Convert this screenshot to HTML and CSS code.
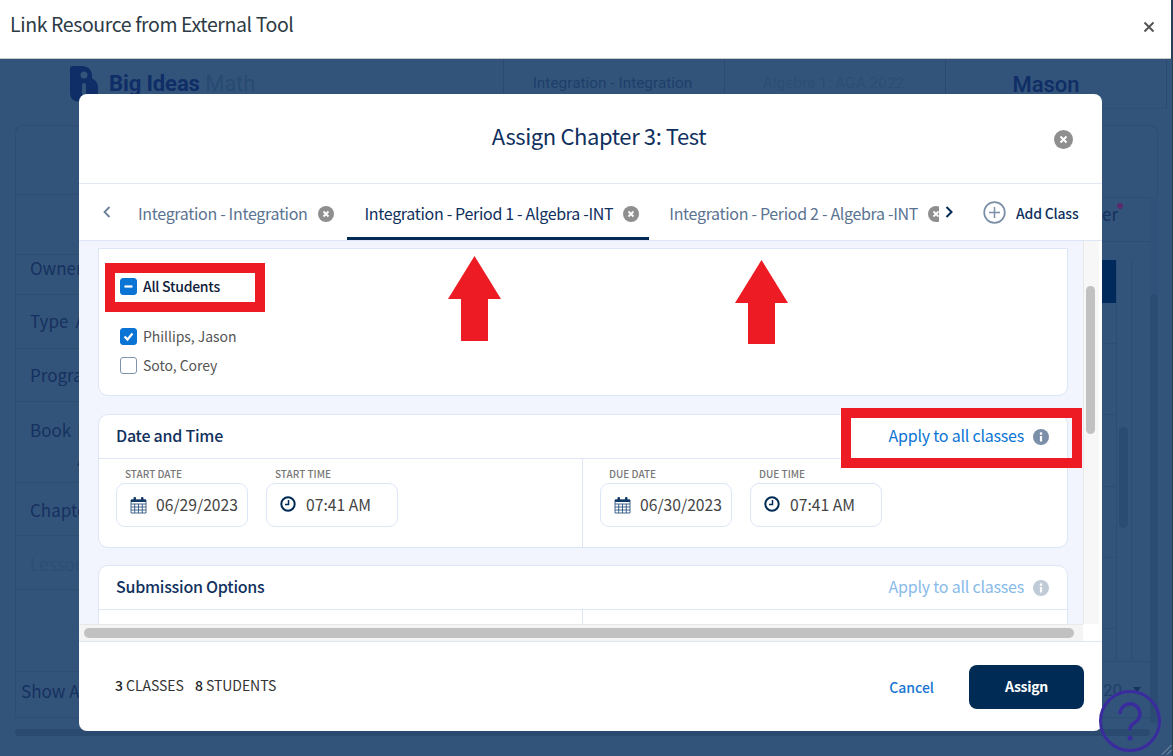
FILE: index.html
```html
<!DOCTYPE html>
<html lang="en">
<head>
<meta charset="utf-8">
<title>Link Resource from External Tool</title>
<link rel="stylesheet" href="styles.css">
</head>
<body>
<header class="tool-bar">
  <h1 class="tool-title">Link Resource from External Tool</h1>
  <svg class="tool-close" width="12" height="12" viewBox="0 0 12 12"><path d="M1.5 1.5l9 9M10.5 1.5l-9 9" stroke="#555" stroke-width="2"/></svg>
</header>
<div class="app">
  <div class="app-head">
    <div class="brand">
      <svg width="28" height="37" viewBox="0 0 28 37"><path d="M3 1h9a9.500 9.500 0 0 1 10 9.500v3a10 10 0 0 1 6 9v6a8 8 0 0 1-8 8H8a8 8 0 0 1-8-8V4a3 3 0 0 1 3-3z" fill="#0f2d66"/><circle cx="14" cy="10" r="3.500" fill="#33547a"/><rect x="12" y="18" width="4" height="14" rx="2" fill="#33547a"/></svg>
      <span class="brand-name"><b>Big Ideas</b> Math</span>
    </div>
    <div class="head-cell head-a">Integration - Integration</div>
    <div class="head-cell head-b">Algebra 1: AGA 2022</div>
    <div class="head-cell head-c">Mason</div>
    <div class="head-end"></div>
  </div>
  <div class="panel">
    <div class="row row-1"></div>
    <div class="row row-2"></div>
    <div class="row row-3"><span>Owner</span></div>
    <div class="row row-4"><span>Type</span><span class="val">A</span></div>
    <div class="row row-5"><span>Program</span></div>
    <div class="row row-6"><span>Book</span><span class="val val-book">B<br>A</span></div>
    <div class="row row-7"><span>Chapter</span></div>
    <div class="row row-8"><span class="muted">Lesson</span></div>
    <div class="row row-9"></div>
    <div class="row row-10"><span>Show All</span></div>
    <div class="right">
      <div class="r-main">
        <div class="r-head"><span class="row-end">er<i class="dot"></i></span></div>
        <div class="r-body">
          <div class="r-rows"><div class="block"></div><div></div><div></div><div></div><div></div><div></div><div></div></div>
          <div class="r-col"><div class="r-thumb"></div></div>
        </div>
        <div class="r-foot"><span class="count">20</span><i class="caret"></i></div>
      </div>
      <div class="r-track"><div class="r-track-thumb"></div></div>
    </div>
  </div>
  <div class="panel-bar"></div>
</div>

<section class="dialog">
  <div class="dlg-head">
    <h2 class="dlg-title">Assign Chapter 3: Test</h2>
    <svg class="dlg-close" width="19" height="19" viewBox="0 0 19 19"><circle cx="9.500" cy="9.500" r="9.500" fill="#8f8f8f"/><path d="M6.500 6.500l6 6M12.500 6.500l-6 6" stroke="#fff" stroke-width="2"/></svg>
  </div>
  <nav class="tabs">
    <svg class="chev chev-l" width="8" height="12" viewBox="0 0 8 12"><path d="M6.500 1L1.500 6l5 5" fill="none" stroke="#6b7f99" stroke-width="1.800"/></svg>
    <div class="tab-strip">
      <div class="tab tab-1"><span>Integration - Integration</span><svg width="16" height="16" viewBox="0 0 16 16"><circle cx="8" cy="8" r="8" fill="#8f8f8f"/><path d="M5.500 5.500l5 5M10.500 5.500l-5 5" stroke="#fff" stroke-width="1.800"/></svg></div>
      <div class="tab tab-2 active"><span>Integration - Period 1 - Algebra -INT</span><svg width="16" height="16" viewBox="0 0 16 16"><circle cx="8" cy="8" r="8" fill="#8f8f8f"/><path d="M5.500 5.500l5 5M10.500 5.500l-5 5" stroke="#fff" stroke-width="1.800"/></svg></div>
      <div class="tab tab-3"><span>Integration - Period 2 - Algebra -INT</span><svg width="16" height="16" viewBox="0 0 16 16"><circle cx="8" cy="8" r="8" fill="#8f8f8f"/><path d="M5.500 5.500l5 5M10.500 5.500l-5 5" stroke="#fff" stroke-width="1.800"/></svg></div>
    </div>
    <svg class="chev chev-r" width="8" height="12" viewBox="0 0 8 12"><path d="M1.500 1l5 5-5 5" fill="none" stroke="#002b55" stroke-width="2"/></svg>
    <div class="add-class">
      <svg width="23" height="23" viewBox="0 0 23 23"><circle cx="11.500" cy="11.500" r="10.300" fill="none" stroke="#7c8fa8" stroke-width="1.700"/><path d="M11.500 6v11M6 11.500h11" stroke="#7c8fa8" stroke-width="1.500"/></svg>
      <span>Add Class</span>
    </div>
  </nav>
  <div class="dlg-body">
    <div class="viewport">
      <div class="card card-students">
        <label class="check all"><span class="box on"><svg width="11" height="11" viewBox="0 0 11 11"><path d="M1.500 5.500h8" stroke="#fff" stroke-width="2.200"/></svg></span>All Students</label>
        <label class="check first"><span class="box on"><svg width="11" height="11" viewBox="0 0 11 11"><path d="M1.500 5.500l3 3 5-6" fill="none" stroke="#fff" stroke-width="2.200"/></svg></span>Phillips, Jason</label>
        <label class="check"><span class="box"></span>Soto, Corey</label>
      </div>
      <div class="card card-date">
        <div class="card-head"><h3>Date and Time</h3><span class="apply">Apply to all classes</span><svg class="info" width="16" height="16" viewBox="0 0 16 16"><circle cx="8" cy="8" r="8" fill="#7b8fa9"/><rect x="6.900" y="7" width="2.200" height="5.500" fill="#fff"/><circle cx="8" cy="4.600" r="1.300" fill="#fff"/></svg></div>
        <div class="split">
          <div class="side">
            <div class="field"><span class="lab">START DATE</span><div class="input"><svg class="cal" width="17" height="18" viewBox="0 0 17 18"><path d="M1 4h15v13H1z M1 8h15M1 11h15M1 14h15M4.700 8V17M8.500 8V17M12.300 8V17" fill="none" stroke="#2f5580" stroke-width="0.900"/><path d="M1 3.500h15v2.500H1z" fill="#123a66"/><rect x="3.500" y="1" width="2.500" height="4" rx="1" fill="#123a66"/><rect x="11" y="1" width="2.500" height="4" rx="1" fill="#123a66"/></svg><span>06/29/2023</span></div></div>
            <div class="field"><span class="lab">START TIME</span><div class="input"><svg class="clk" width="16" height="16" viewBox="0 0 16 16"><circle cx="8" cy="8" r="6.700" fill="none" stroke="#002b55" stroke-width="2"/><path d="M8.500 4v4.500H5" fill="none" stroke="#002b55" stroke-width="1.500"/></svg><span>07:41 AM</span></div></div>
          </div>
          <div class="side">
            <div class="field"><span class="lab">DUE DATE</span><div class="input"><svg class="cal" width="17" height="18" viewBox="0 0 17 18"><path d="M1 4h15v13H1z M1 8h15M1 11h15M1 14h15M4.700 8V17M8.500 8V17M12.300 8V17" fill="none" stroke="#2f5580" stroke-width="0.900"/><path d="M1 3.500h15v2.500H1z" fill="#123a66"/><rect x="3.500" y="1" width="2.500" height="4" rx="1" fill="#123a66"/><rect x="11" y="1" width="2.500" height="4" rx="1" fill="#123a66"/></svg><span>06/30/2023</span></div></div>
            <div class="field"><span class="lab">DUE TIME</span><div class="input"><svg class="clk" width="16" height="16" viewBox="0 0 16 16"><circle cx="8" cy="8" r="6.700" fill="none" stroke="#002b55" stroke-width="2"/><path d="M8.500 4v4.500H5" fill="none" stroke="#002b55" stroke-width="1.500"/></svg><span>07:41 AM</span></div></div>
          </div>
        </div>
      </div>
      <div class="card card-sub">
        <div class="card-head"><h3>Submission Options</h3><span class="apply off">Apply to all classes</span><svg class="info" width="16" height="16" viewBox="0 0 16 16"><circle cx="8" cy="8" r="8" fill="#c0cbd8"/><rect x="6.900" y="7" width="2.200" height="5.500" fill="#fff"/><circle cx="8" cy="4.600" r="1.300" fill="#fff"/></svg></div>
        <div class="split split-sub"><div class="side"></div><div class="side"></div></div>
      </div>
    </div>
    <div class="vbar"><div class="vthumb"></div></div>
    <div class="hbar"><div class="hthumb"></div></div>
    <div class="corner"></div>
  </div>
  <footer class="dlg-foot">
    <div class="totals"><b>3</b> CLASSES <b class="second">8</b> STUDENTS</div>
    <button class="cancel">Cancel</button>
    <button class="assign">Assign</button>
  </footer>
</section>

<div class="mark mark-all"></div>
<div class="mark mark-apply"></div>
<svg class="arrow arrow-a" width="53" height="85" viewBox="0 0 53 85"><path d="M26.500 0L53 43H40V85H13V43H0z" fill="#ed1c24"/></svg>
<svg class="arrow arrow-b" width="53" height="84" viewBox="0 0 53 84"><path d="M26.500 0L53 43H40V84H13V43H0z" fill="#ed1c24"/></svg>
<svg class="help" width="62" height="62" viewBox="0 0 62 62"><circle cx="31" cy="31" r="29.500" fill="none" stroke="#3a2c9e" stroke-width="3"/><path d="M21 24a10 10 0 1 1 15 8.500c-3.500 2-5 3.500-5 8" fill="none" stroke="#3a2c9e" stroke-width="3.500"/><circle cx="31" cy="48" r="2.500" fill="#3a2c9e"/></svg>
<svg class="grip" width="11" height="11" viewBox="0 0 11 11"><path d="M1 10.500L10.500 1M6 10.500L10.500 6" stroke="#8a9aaa" stroke-width="1"/></svg>
</body>
</html>
```
FILE: styles.css
```css
* { box-sizing: border-box; }
html, body { margin: 0; height: 100%; }
body {
  width: 1173px;
  height: 756px;
  overflow: hidden;
  position: relative;
  background: #2c4055;
  font-family: "Noto Sans CJK SC", "Source Sans Pro", "Noto Sans", sans-serif;
  color: #222;
}
h1, h2, h3 { margin: 0; font-weight: 400; }

.tool-bar {
  height: 59px;
  width: 1171px;
  background: #fff;
  border-bottom: 1px solid #c8c8c8;
  display: flex;
  justify-content: space-between;
  padding: 10px 16px 0 10px;
}
.tool-title { font-size: 19.500px; letter-spacing: -0.400px; line-height: 28px; color: #2d3b45; }
.tool-close { margin-top: 11px; }

.app { width: 1172px; height: 697px; background: #33547a; color: #16305f; font-size: 17px; overflow: hidden; }
.app-head {
  height: 50px;
  display: grid;
  grid-template-columns: 503px 221px 221px 221px 6px;
}
.brand { padding: 6px 0 0 70px; display: flex; gap: 11px; height: 44px; }
.brand-name { font-family: "Roboto", sans-serif; font-size: 22px; line-height: 38px; color: #274a73; letter-spacing: -0.100px; }
.brand-name b { color: #0f2d66; }
.head-cell {
  border-left: 1px solid #2a4a70;
  border-bottom: 1px solid #2f5075;
  display: flex;
  align-items: center;
  justify-content: center;
  font-family: "Roboto", sans-serif;
  font-size: 15.400px;
  padding: 0 3px 2px 0;
}
.head-a { color: #1d3f6a; }
.head-b { color: #2c4d75; }
.head-c { color: #0f2d66; font-size: 22px; font-weight: 500; padding: 2px 20px 0 0; }
.head-end { border-left: 1px solid #2a4a70; }

.panel {
  position: relative;
  margin: 16px 14px 0 15px;
  height: 594px;
  border: 1px solid #2e4d72;
  border-bottom: 0;
  border-radius: 8px 8px 0 0;
}
.row {
  width: 64px;
  border-bottom: 1px solid #2e4d72;
  display: flex;
  white-space: nowrap;
  padding-left: 14px;
  line-height: 24px;
}
.row-1 { height: 69px; }
.row-2 { height: 60px; }
.row-3 { height: 40px; padding-top: 1px; }
.row-4 { height: 54px; padding-top: 14px; }
.row-5 { height: 53px; padding-top: 14px; }
.row-6 { height: 81px; padding-top: 16px; }
.row-7 { height: 53px; padding-top: 15px; }
.row-8 { height: 54px; padding-top: 16px; }
.row-9 { height: 82px; }
.row-10 { height: 46px; padding: 0 0 8px 5px; align-items: center; }
.val { margin-left: 7px; }
.val-book { line-height: 27px; margin-left: 6px; }
.muted { color: #2c4d75; }

.right {
  position: absolute;
  left: 1086px;
  top: 71px;
  width: 56px;
  height: 526px;
  display: grid;
  grid-template-columns: 48px 8px;
}
.r-head { height: 45px; border-top: 1px solid #2e4d72; border-bottom: 1px solid #2e4d72; padding: 3px 0 0 0; }
.row-end { position: relative; display: inline-block; line-height: 24px; margin-top: 0; }
.dot { position: absolute; left: 15px; top: 1px; width: 6px; height: 6px; border-radius: 50%; background: #5a2a6a; }
.r-body { margin-top: 18px; height: 402px; display: flex; border-bottom: 1px solid #2e4d72; }
.r-rows { width: 14px; display: grid; grid-template-rows: 43px 41px 71px 72px 71px 71px 32px; }
.r-rows div { border-bottom: 1px solid #2e4d72; }
.r-rows div:last-child { border-bottom: 0; }
.r-rows .block { background: #012a5c; border-bottom: 0; }
.r-col { width: 16px; border-left: 1px solid #2e4d72; border-right: 1px solid #2e4d72; padding: 167px 3px 0 2px; }
.r-thumb { height: 101px; background: #2a4c72; border-radius: 5px; }
.r-foot { display: flex; align-items: center; height: 56px; gap: 10px; padding-top: 0; border-bottom: 1px solid #2e4d72; }
.count { font-family: "Roboto", sans-serif; font-size: 17px; color: #1f3f6a; margin-left: 1px; }
.caret { width: 0; height: 0; border: 4px solid transparent; border-top: 5px solid #16305f; border-bottom: 0; margin-left: 1px; }
.r-track { background: #30517a; }
.r-track-thumb { height: 429px; margin-top: 97px; background: #2c4d73; border-radius: 4px; }
.panel-bar { margin: 10px 22px 0 15px; height: 7px; background: #2a4a70; border-radius: 4px; }

.dialog {
  position: absolute;
  left: 79px;
  top: 94px;
  width: 1023px;
  height: 637px;
  background: #fff;
  border-radius: 8px;
  overflow: hidden;
  display: flex;
  flex-direction: column;
}
.dlg-head {
  height: 90px;
  flex: none;
  border-bottom: 1px solid #e2e8f6;
  display: flex;
  align-items: center;
  justify-content: center;
  position: relative;
  padding: 0 0 8px 17px;
}
.dlg-title { font-size: 22px; letter-spacing: -0.400px; line-height: 34px; color: #10305e; }
.dlg-close { position: absolute; right: 29px; top: 36px; }

.tabs {
  height: 57px;
  flex: none;
  border-bottom: 1px solid #dde5f7;
  display: flex;
  align-items: flex-start;
}
.chev { flex: none; }
.chev-l { margin: 22px 0 0 24px; }
.tab-strip { width: 801px; height: 56px; overflow: hidden; display: flex; flex: none; margin-left: 27px; }
.tab {
  flex: none;
  display: flex;
  align-items: center;
  gap: 10px;
  height: 56px;
  padding-top: 2px;
  font-size: 16px;
  letter-spacing: -0.320px;
  line-height: 24px;
  color: #5a7391;
}
.tab svg { margin-top: 1px; }
.tab-2 { margin-left: 13px; padding: 5px 10px 0 18px; border-bottom: 3px solid #002b55; color: #10305e; }
.tab-3 { margin-left: 20px; }
.chev-r { margin: 22px 0 0 6px; }
.add-class { display: flex; align-items: center; gap: 10px; margin: 16px 0 0 30px; font-size: 14px; letter-spacing: -0.200px; line-height: 23px; color: #10305e; font-weight: 500; }
.add-class span { margin-top: 2px; }

.dlg-body {
  flex: 1;
  min-height: 0;
  display: grid;
  grid-template-columns: 1fr 19px;
  grid-template-rows: 1fr 17px;
  background: #fff;
  border-bottom: 1px solid #dde5f7;
}
.viewport { background: #f2f5fd; padding: 7px 15px 0 19px; overflow: hidden; }
.card { background: #fff; border: 1px solid #dde5f7; border-radius: 10px; margin-bottom: 17px; }
.card-students { height: 148px; border-top-left-radius: 0; border-top-right-radius: 0; padding: 28px 0 0 21px; margin-bottom: 18px; }
.card-date { height: 134px; }
.card-sub { height: 140px; }
.check { display: flex; align-items: center; gap: 6px; height: 18px; font-size: 14px; letter-spacing: -0.050px; line-height: 18px; color: #555; margin-bottom: 11px; }
.check.all { color: #10203a; font-weight: 500; letter-spacing: -0.270px; margin-bottom: 32px; }
.box { width: 17px; height: 17px; border-radius: 3px; border: 1px solid #7f93ad; display: flex; align-items: center; justify-content: center; }
.box.on { background: #0a74d4; border-color: #0a74d4; }
.card-head { height: 44px; display: flex; align-items: center; padding: 0 18px 3px 17px; border-bottom: 1px solid #dde5f7; }
.card-head h3 { font-size: 16px; letter-spacing: -0.250px; line-height: 24px; font-weight: 500; color: #10305e; flex: 1; }
.apply { font-size: 16px; letter-spacing: -0.220px; line-height: 24px; color: #0a74d4; margin-right: 9px; }
.apply.off { color: #87bbea; }
.info { margin-top: 3px; }
.split { display: grid; grid-template-columns: 483px 1fr; height: 88px; }
.split-sub { height: 90px; }
.side { display: flex; gap: 18px; padding: 8px 0 0 17px; }
.side + .side { border-left: 1px solid #dde5f7; }
.field { width: 132px; }
.lab { display: block; font-size: 10px; line-height: 14px; height: 16px; margin-left: 9px; color: #777; font-weight: 500; }
.input {
  height: 44px;
  border: 1px solid #dde5f7;
  border-radius: 9px;
  display: flex;
  align-items: center;
  padding-left: 13px;
  font-size: 15.700px;
  color: #444;
}
.input span { line-height: 20px; }
.cal { margin-right: 9px; flex: none; }
.clk { margin-right: 10px; flex: none; margin-bottom: 2px; }

.vbar { background: #f7f7f7; border-left: 1px solid #e8e8e8; border-right: 3px solid #fff; padding: 45px 4px 0 2px; }
.vthumb { height: 148px; background: #c1c1c1; border-radius: 5px; }
.hbar { background: #f4f4f4; border-top: 1px solid #e8e8e8; padding: 3px 9px 0 5px; }
.hthumb { height: 10px; background: #c1c1c1; border-radius: 5px; }
.corner { background: #fff; }

.dlg-foot { height: 89px; flex: none; display: flex; align-items: center; padding: 0 18px 0 36px; }
.totals { flex: 1; font-size: 14px; letter-spacing: -0.050px; line-height: 20px; color: #333; padding-bottom: 4px; }
.totals b { font-weight: 500; color: #222; }
.totals .second { margin-left: 8px; }
button { font-family: inherit; border: 0; padding: 0; cursor: pointer; }
.cancel { background: none; font-size: 14px; line-height: 20px; font-weight: 500; color: #1976d2; margin-right: 35px; }
.assign { width: 115px; height: 44px; background: #002b55; color: #fff; border-radius: 8px; font-size: 14px; letter-spacing: -0.300px; font-weight: 700; padding-bottom: 1px; }

.mark { position: absolute; border: 10px solid #ed1c24; }
.mark-all { left: 105px; top: 263px; width: 160px; height: 49px; }
.mark-apply { left: 841px; top: 408px; width: 241px; height: 60px; }
.arrow { position: absolute; }
.arrow-a { left: 448px; top: 256px; }
.arrow-b { left: 735px; top: 260px; }
.help { position: absolute; left: 1099px; top: 690px; }
.grip { position: absolute; left: 1161px; top: 744px; }
```
